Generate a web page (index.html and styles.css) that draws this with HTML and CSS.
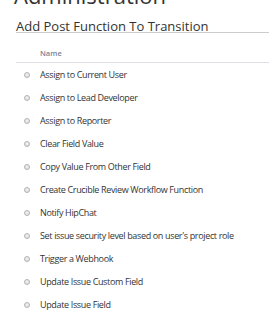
FILE: index.html
```html
<!DOCTYPE html>
<html lang="en">
<head>
    <meta charset="utf-8">
    <title>Add Post Function To Transition</title>
    <link rel="stylesheet" href="styles.css">
</head>
<body>
    <header class="admin-header">
        <h1>Administration</h1>
    </header>
    <main class="content">
        <h2 class="section-title">Add Post Function To Transition</h2>
        <table class="function-table">
            <thead>
                <tr>
                    <th class="col-radio"></th>
                    <th>Name</th>
                </tr>
            </thead>
            <tbody>
                <tr><td class="col-radio"><input type="radio" name="fn"></td><td>Assign to Current User</td></tr>
                <tr><td class="col-radio"><input type="radio" name="fn"></td><td>Assign to Lead Developer</td></tr>
                <tr><td class="col-radio"><input type="radio" name="fn"></td><td>Assign to Reporter</td></tr>
                <tr><td class="col-radio"><input type="radio" name="fn"></td><td>Clear Field Value</td></tr>
                <tr><td class="col-radio"><input type="radio" name="fn"></td><td>Copy Value From Other Field</td></tr>
                <tr><td class="col-radio"><input type="radio" name="fn"></td><td>Create Crucible Review Workflow Function</td></tr>
                <tr><td class="col-radio"><input type="radio" name="fn"></td><td>Notify HipChat</td></tr>
                <tr><td class="col-radio"><input type="radio" name="fn"></td><td>Set issue security level based on user's project role</td></tr>
                <tr><td class="col-radio"><input type="radio" name="fn"></td><td>Trigger a Webhook</td></tr>
                <tr><td class="col-radio"><input type="radio" name="fn"></td><td>Update Issue Custom Field</td></tr>
                <tr><td class="col-radio"><input type="radio" name="fn"></td><td>Update Issue Field</td></tr>
            </tbody>
        </table>
    </main>
</body>
</html>
```

FILE: styles.css
```css
/* Page basics */
body {
    font-family: "Open Sans", Arial, sans-serif;
    color: #333;
    margin: 0;
    padding: 0;
    background: #fff;
    overflow: hidden;
}

/* Page title, mostly scrolled off the top */
.admin-header {
    display: flow-root;
    height: 8px;
    padding: 0 14px;
}

.admin-header h1 {
    margin: -18px 0 0;
    font-size: 22px;
    font-weight: normal;
    line-height: 26px;
    color: #333;
}

.content {
    padding: 12px 0 0 16px;
}

/* Section heading with underline */
.section-title {
    margin: 0;
    font-size: 13px;
    font-weight: normal;
    line-height: 12px;
    border-bottom: 1px solid #ccc;
    color: #333;
}

.function-table {
    width: 100%;
    border-collapse: collapse;
    font-size: 9px;
    letter-spacing: -0.35px;
}

.function-table th {
    text-align: left;
    font-size: 7.5px;
    font-weight: 600;
    line-height: 10px;
    letter-spacing: 0;
    color: #7a869a;
    padding: 15px 0 4px;
    border-bottom: 1px solid #dfe1e6;
}

.function-table td {
    padding: 0;
    height: 23px;
    vertical-align: middle;
}

.col-radio {
    width: 24px;
}

/* Grey radio buttons */
.function-table input[type="radio"] {
    appearance: none;
    -webkit-appearance: none;
    width: 6px;
    height: 6px;
    margin: 0 0 0 8px;
    display: block;
    border-radius: 50%;
    border: 1px solid #b5b5b5;
    background: radial-gradient(circle at 50% 40%, #f6f6f6, #d4d4d4);
}
```
